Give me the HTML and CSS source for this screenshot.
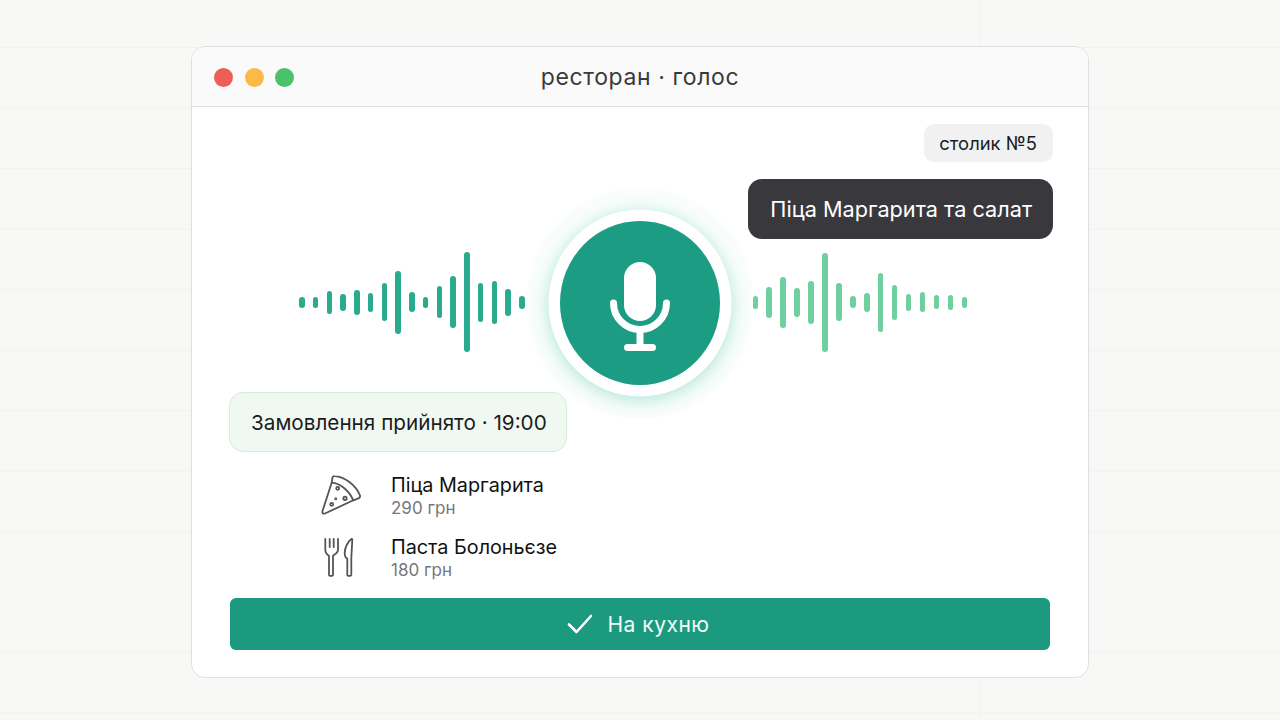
FILE: index.html
```html
<!DOCTYPE html>
<html lang="uk">
<head>
    <meta charset="UTF-8">
    <meta name="viewport" content="width=device-width, initial-scale=1.0">
    <title>ресторан · голос</title>
    <link rel="stylesheet" href="styles.css">
</head>
<body>
    <div class="window">
        <header class="titlebar">
            <div class="dots">
                <span class="dot red"></span>
                <span class="dot yellow"></span>
                <span class="dot green"></span>
            </div>
            <h1>ресторан · голос</h1>
        </header>

        <main class="content">
            <div class="table-chip">столик №5</div>
            <div class="bubble-dark">Піца Маргарита та салат</div>

            <div class="voice">
                <div class="wave wave-left">
                    <i style="height:11px"></i><i style="height:11px"></i><i style="height:23px"></i><i style="height:17px"></i><i style="height:25px"></i><i style="height:19px"></i><i style="height:38px"></i><i style="height:63px"></i><i style="height:20px"></i><i style="height:11px"></i><i style="height:32px"></i><i style="height:52px"></i><i style="height:100px"></i><i style="height:39px"></i><i style="height:43px"></i><i style="height:27px"></i><i style="height:13px"></i>
                </div>
                <div class="mic">
                    <svg width="64" height="96" viewBox="0 0 64 96" fill="none" stroke="#fff" stroke-width="7" stroke-linecap="round">
                        <rect x="16" y="4" width="32" height="59" rx="16" fill="#fff" stroke="none"/>
                        <path d="M5.500 45a26.500 26.500 0 0 0 53 0"/>
                        <path d="M32 72v17M19.500 89.500h25"/>
                    </svg>
                </div>
                <div class="wave wave-right">
                    <i style="height:13px"></i><i style="height:31px"></i><i style="height:51px"></i><i style="height:29px"></i><i style="height:43px"></i><i style="height:99px"></i><i style="height:38px"></i><i style="height:12px"></i><i style="height:19px"></i><i style="height:59px"></i><i style="height:35px"></i><i style="height:17px"></i><i style="height:20px"></i><i style="height:14px"></i><i style="height:15px"></i><i style="height:11px"></i>
                </div>
            </div>

            <div class="bubble-light">Замовлення прийнято · 19:00</div>

            <div class="items">
                <div class="item">
                    <svg class="item-icon" width="42" height="42" viewBox="0 0 42 42" fill="none" stroke="#555" stroke-width="1.800" stroke-linecap="round" stroke-linejoin="round">
                        <path d="M11.700 7.700L2.500 36Q1.800 39.500 5 38.500L33.300 25.300"/>
                        <path d="M11.700 7.700C20 8.500 29 15 33.300 25.300"/>
                        <path d="M11.700 7.700L12.500 2.500Q13 1 14.500 1.200C25 2 36 10 40 20.500Q40.500 22.500 38.500 23.300L33.300 25.300"/>
                        <circle cx="17.700" cy="13.300" r="1.500"/>
                        <circle cx="25" cy="23.300" r="1.700"/>
                        <circle cx="11.700" cy="29.300" r="1.500"/>
                        <circle cx="15.700" cy="23.700" r=".6"/>
                    </svg>
                    <div class="item-text">
                        <div class="item-name">Піца Маргарита</div>
                        <div class="item-price">290 грн</div>
                    </div>
                </div>
                <div class="item">
                    <svg class="item-icon" width="42" height="42" viewBox="0 0 42 42" fill="none" stroke="#555" stroke-width="1.800" stroke-linecap="round" stroke-linejoin="round">
                        <path d="M5.300 2v10.700C5.300 15.500 7 17.500 9 18.700v19c0 1.600 4 1.600 4 0v-19c2-1.200 5-3.200 5-6V2"/>
                        <path d="M9.700 2v8M13.700 2v8"/>
                        <path d="M31.300 2C27.500 5 24.700 11 24.700 16c0 3 1 5 2.600 5.500v16.200c0 1.600 4 1.600 4 0V21l1-18c0-1-.500-1.300-1-1Z"/>
                    </svg>
                    <div class="item-text">
                        <div class="item-name">Паста Болоньєзе</div>
                        <div class="item-price">180 грн</div>
                    </div>
                </div>
            </div>

            <button class="send">
                <svg width="26" height="20" viewBox="0 0 26 20" fill="none" stroke="#fff" stroke-width="2.600" stroke-linecap="round" stroke-linejoin="round">
                    <path d="M2 10.500l7.500 7.500L24 2"/>
                </svg>
                На кухню
            </button>
        </main>
    </div>
</body>
</html>
```

FILE: styles.css
```css
* {
    box-sizing: border-box;
}

body {
    margin: 0;
    height: 720px;
    padding-top: 46px;
    overflow: hidden;
    font-family: 'Inter', 'Liberation Sans', sans-serif;
    color: #1c1c1e;
    background-color: #f8f8f7;
    background-image:
        linear-gradient(#f2f2f1 1px, transparent 1px),
        linear-gradient(90deg, #f2f2f1 1px, transparent 1px);
    background-size: 61px 60.500px;
    background-position: 3px 47px;
}

.window {
    width: 898px;
    height: 632px;
    margin-left: 191px;
    background-color: #fff;
    border: 1.500px solid #dfdfe1;
    border-radius: 14px;
    overflow: hidden;
}

.titlebar {
    position: relative;
    display: flex;
    align-items: center;
    justify-content: center;
    height: 60px;
    padding-top: 1px;
    background-color: #fafafa;
    border-bottom: 1.500px solid #dedee0;
}

.titlebar h1 {
    margin: 0;
    font-size: 23px;
    font-weight: 400;
    letter-spacing: 0.600px;
    color: #3a3a3c;
}

.dots {
    position: absolute;
    left: 22px;
    top: 21px;
    display: flex;
    gap: 11.700px;
}

.dot {
    width: 19px;
    height: 19px;
    border-radius: 50%;
}

.red { background-color: #ec5f59; }
.yellow { background-color: #fdb945; }
.green { background-color: #4cc16b; }

.content {
    display: flex;
    flex-direction: column;
    padding: 17px 34px 0 37px;
}

.table-chip {
    align-self: flex-end;
    height: 38px;
    margin-right: 1px;
    padding: 0 16px 0 15px;
    line-height: 38px;
    font-size: 18.400px;
    background-color: #f1f1f2;
    border-radius: 10px;
}

.bubble-dark {
    position: relative;
    z-index: 2;
    align-self: flex-end;
    height: 60px;
    margin-top: 17px;
    margin-right: 1px;
    padding: 0 21px 0 22px;
    line-height: 61px;
    font-size: 21.700px;
    color: #fff;
    background-color: #38383d;
    border-radius: 14px;
}

.voice {
    display: flex;
    align-items: center;
    height: 182px;
    margin-top: -27px;
    padding-left: 70px;
}

.wave {
    display: flex;
    align-items: center;
    margin-top: -2px;
}

.wave i {
    display: block;
    width: 5.500px;
    border-radius: 3px;
}

.wave-left {
    gap: 8.250px;
    margin-right: 35px;
}

.wave-right {
    gap: 8.450px;
    margin-left: 33px;
}

.wave-left i { background-color: #2bab8d; }
.wave-right i { background-color: #6fcf9f; }

.mic {
    flex: none;
    display: flex;
    align-items: center;
    justify-content: center;
    width: 160px;
    height: 164px;
    padding-top: 6px;
    background-color: #1c9c82;
    border-radius: 50%;
    box-shadow:
        0 0 0 11.500px #fff,
        0 3px 14px 14px rgba(90, 205, 175, 0.36),
        0 0 0 33.500px #f9fdfc;
}

.bubble-light {
    position: relative;
    align-self: flex-start;
    height: 60px;
    margin-top: -2px;
    padding: 0 19px 0 21px;
    line-height: 59px;
    font-size: 20.700px;
    background-color: #f0f9f1;
    border: 1px solid #d5ebde;
    border-radius: 14px;
}

.items {
    display: flex;
    flex-direction: column;
    gap: 15px;
    margin-top: 20px;
    padding-left: 91px;
}

.item {
    display: flex;
    align-items: center;
    height: 47px;
}

.item-icon {
    flex: none;
    margin-right: 29px;
}

.item-name {
    font-size: 19.800px;
    line-height: 26px;
    color: #111;
}

.item-price {
    font-size: 17px;
    line-height: 21px;
    color: #77777b;
}

.send {
    display: flex;
    align-items: center;
    justify-content: center;
    gap: 14px;
    width: 820px;
    height: 52px;
    margin: 17px 0 0 1px;
    padding: 0 3px 0 0;
    font-family: inherit;
    font-size: 21px;
    letter-spacing: 0.500px;
    color: #f3fbf8;
    background-color: #1c9a80;
    border: none;
    border-radius: 6px;
}
```
